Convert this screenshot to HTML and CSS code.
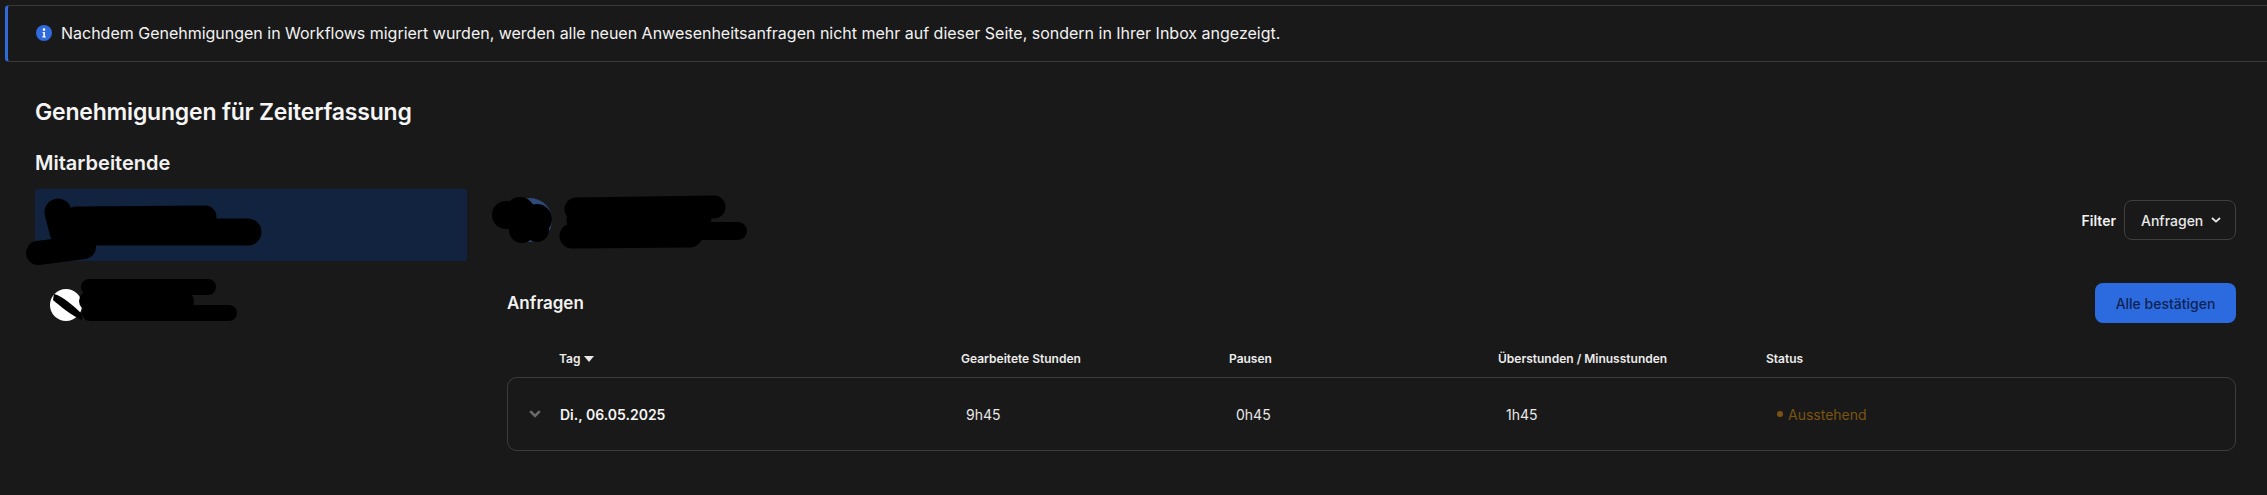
FILE: index.html
```html
<!DOCTYPE html>
<html lang="de">
<head>
  <meta charset="UTF-8" />
  <title>Genehmigungen für Zeiterfassung</title>
  <link rel="stylesheet" href="styles.css">
</head>
<body>

  <div class="banner">
    <svg class="banner-icon" viewBox="0 0 16 16" width="16" height="16">
      <circle cx="8" cy="8" r="8" fill="#2f6bdc"/>
      <circle cx="8" cy="4.6" r="1.3" fill="#fff"/>
      <path d="M6.6 6.9h2.3v4.4h.8v1.2H6.4v-1.2h.9V8.1h-.7z" fill="#fff"/>
    </svg>
    <span>Nachdem Genehmigungen in Workflows migriert wurden, werden alle neuen Anwesenheitsanfragen nicht mehr auf dieser Seite, sondern in Ihrer Inbox angezeigt.</span>
  </div>

  <h1 class="page-title">Genehmigungen für Zeiterfassung</h1>

  <div class="content">
    <aside class="people">
      <h2 class="people-title">Mitarbeitende</h2>
      <div class="person person-active"></div>
      <div class="person">
        <span class="avatar avatar-light"></span>
      </div>
    </aside>

    <section class="details">
      <div class="details-top">
        <span class="avatar avatar-blue"></span>
        <div class="filter">
          <span class="filter-label">Filter</span>
          <button class="filter-select">
            Anfragen
            <svg viewBox="0 0 10 6" width="10" height="6"><path d="M1 1l4 3.6L9 1" fill="none" stroke="#e8e8e8" stroke-width="1.8"/></svg>
          </button>
        </div>
      </div>

      <div class="requests-top">
        <h3 class="requests-title">Anfragen</h3>
        <button class="confirm-all">Alle bestätigen</button>
      </div>

      <div class="table-head">
        <span class="sort">Tag <svg viewBox="0 0 10 6" width="10" height="6"><path d="M0 0h10L5 6z" fill="#e8e8e8"/></svg></span>
        <span>Gearbeitete Stunden</span>
        <span>Pausen</span>
        <span>Überstunden / Minusstunden</span>
        <span>Status</span>
      </div>

      <div class="table-row">
        <svg class="row-chevron" viewBox="0 0 12 8" width="12" height="8"><path d="M1.2 1.2L6 6l4.8-4.8" fill="none" stroke="#6a6a6a" stroke-width="2.6"/></svg>
        <span class="row-date">Di., 06.05.2025</span>
        <span>9h45</span>
        <span>0h45</span>
        <span>1h45</span>
        <span class="status"><i class="status-dot"></i>Ausstehend</span>
      </div>
    </section>
  </div>

  <!-- geschwärzte Namen und Bilder -->
  <svg class="redactions" width="2267" height="495" viewBox="0 0 2267 495">
    <g fill="none" stroke="#000" stroke-linecap="round" stroke-linejoin="round">
      <path d="M58 212L63 232" stroke-width="27"/>
      <path d="M76 218L205 217" stroke-width="23"/>
      <path d="M72 232L248 232" stroke-width="27"/>
      <path d="M38 253L84 247" stroke-width="24"/>
      <path d="M89 287L208 287" stroke-width="16"/>
      <path d="M89 301L184 301" stroke-width="20"/>
      <path d="M90 313L229 313" stroke-width="16"/>
      <path d="M576 209L714 207" stroke-width="23"/>
      <path d="M578 220L700 218" stroke-width="23"/>
      <path d="M572 236L690 235" stroke-width="25"/>
      <path d="M690 231L738 231" stroke-width="18"/>
    </g>
    <g fill="#000">
      <circle cx="520" cy="212" r="15"/>
      <circle cx="506" cy="215" r="14"/>
      <circle cx="537" cy="219" r="15"/>
      <circle cx="522" cy="230" r="13"/>
      <circle cx="537" cy="230" r="12"/>
      <path d="M54 294C62 296 74 306 82 314L82 320C72 316 60 306 53 300z"/>
    </g>
  </svg>

</body>
</html>
```

FILE: styles.css
```css
html, body {
  margin: 0;
  padding: 0;
  width: 100%;
  height: 100%;
  overflow: hidden;
  font-family: "Inter", "Liberation Sans", sans-serif;
  background-color: #191919;
  color: #f2f2f2;
}

body {
  position: relative;
  padding-top: 5px;
  box-sizing: border-box;
}

.banner {
  display: flex;
  align-items: center;
  gap: 9px;
  height: 57px;
  box-sizing: border-box;
  margin-left: 5px;
  padding-left: 28px;
  padding-bottom: 1px;
  border: 1px solid #3a3a3a;
  border-left: 3px solid #2f6bdc;
  border-right: 0;
  border-radius: 4px 0 0 4px;
  font-size: 16px;
  line-height: 20px;
  letter-spacing: -0.01px;
}

.banner-icon {
  flex: none;
}

.page-title {
  margin: 35px 0 0 35px;
  font-size: 23px;
  line-height: 30px;
  font-weight: 600;
  letter-spacing: -0.2px;
  color: #f5f5f5;
}

.content {
  display: flex;
  gap: 40px;
  padding: 0 31px 0 35px;
  margin-top: 23px;
}

.people {
  flex: none;
  width: 432px;
}

.people-title {
  margin: 0 0 13px;
  font-size: 20px;
  line-height: 26px;
  font-weight: 600;
}

.person {
  display: flex;
  align-items: center;
  height: 72px;
  margin-bottom: 8px;
  padding-left: 15px;
  border-radius: 2px;
}

.person-active {
  background-color: #12233f;
}

.avatar {
  display: block;
  flex: none;
  border-radius: 50%;
}

.avatar-light {
  width: 32px;
  height: 32px;
  background-color: #fff;
}

.avatar-blue {
  width: 44px;
  height: 44px;
  background-color: #2e4a78;
}

.details {
  flex: 1;
  min-width: 0;
  padding-top: 39px;
}

.details-top {
  display: flex;
  align-items: center;
  justify-content: space-between;
  height: 62px;
  padding-left: 1px;
}

.filter {
  display: flex;
  align-items: center;
  gap: 8px;
}

.filter-label {
  font-size: 14px;
  font-weight: 600;
}

.filter-select {
  display: flex;
  align-items: center;
  gap: 8px;
  height: 40px;
  width: 112px;
  box-sizing: border-box;
  padding: 0 0 0 16px;
  background: transparent;
  border: 1px solid #3f3f3f;
  border-radius: 8px;
  font: 500 14px "Inter", sans-serif;
  color: #e8e8e8;
}

.requests-top {
  display: flex;
  align-items: center;
  justify-content: space-between;
  height: 40px;
  margin-top: 32px;
}

.requests-title {
  margin: 0;
  font-size: 17px;
  font-weight: 600;
}

.confirm-all {
  width: 141px;
  height: 40px;
  background-color: #2c6bdf;
  border: 0;
  border-radius: 8px;
  font: 500 14px "Inter", sans-serif;
  color: #0f2352;
}

.table-head {
  display: grid;
  grid-template-columns: 402px 268px 269px 268px 1fr;
  align-items: center;
  height: 20px;
  margin-top: 25px;
  padding-left: 52px;
  font-size: 12px;
  font-weight: 600;
  color: #ececec;
}

.sort svg {
  margin-left: 1px;
  vertical-align: 1px;
}

.table-row {
  display: grid;
  grid-template-columns: 52px 406px 270px 270px 271px 1fr;
  align-items: center;
  height: 74px;
  box-sizing: border-box;
  margin-top: 9px;
  border: 1px solid #3d3d3d;
  border-radius: 10px;
  font-size: 14px;
  color: #e8e8e8;
}

.row-chevron {
  justify-self: center;
  margin-left: 1px;
}

.row-date {
  font-weight: 600;
  color: #f5f5f5;
}

.status {
  display: flex;
  align-items: center;
  gap: 5px;
  color: #7a5410;
}

.status-dot {
  display: block;
  width: 6px;
  height: 6px;
  border-radius: 50%;
  background-color: #7a5410;
}

.redactions {
  position: absolute;
  top: 0;
  left: 0;
  pointer-events: none;
}
```
